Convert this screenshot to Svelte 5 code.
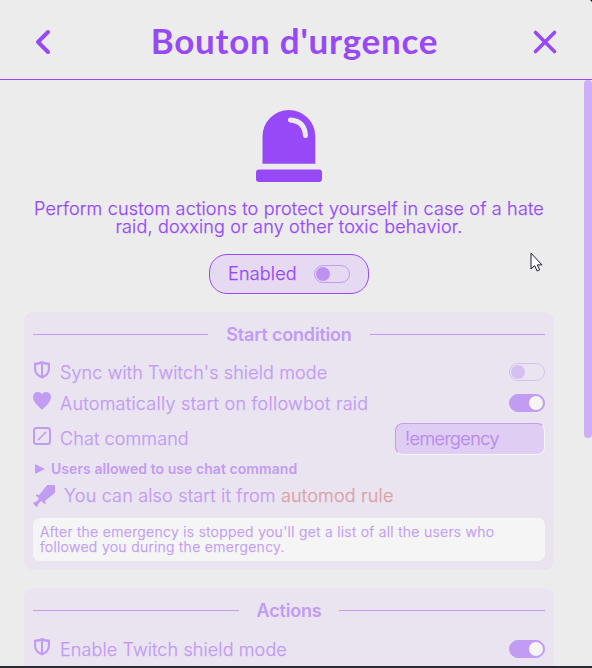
<script>
  let enabled = $state(false);
  let sync = $state(false);
  let followbot = $state(true);
  let shield = $state(true);
  let command = $state('!emergency');
</script>

{#snippet toggle(on, flip, label)}
  <button class="toggle" class:on role="switch" aria-checked={on} aria-label={label} onclick={flip}><i></i></button>
{/snippet}

{#snippet shieldIcon()}
  <svg class="icon" width="18" height="18" viewBox="0 0 18 18">
    <path fill-rule="evenodd" d="M9 0Q12.500 1.500 17 1.800V8Q16.600 14.800 9 17.500Q1.400 14.800 1 8V1.800Q5.500 1.500 9 0ZM8 3Q5.700 3.800 3.200 4V8Q3.400 12.700 8 14.500ZM10 3V14.500Q14.600 12.700 14.800 8V4Q12.300 3.800 10 3Z" />
  </svg>
{/snippet}

<div class="window">
  <header>
    <button class="nav" aria-label="Back">
      <svg width="18" height="26" viewBox="0 0 18 26"><path d="M15 3L5 13L15 23" /></svg>
    </button>
    <h1>Bouton d'urgence</h1>
    <button class="nav close" aria-label="Close">
      <svg width="26" height="26" viewBox="0 0 26 26"><path d="M3.500 3.500L22.500 22.500M22.500 3.500L3.500 22.500" /></svg>
    </button>
  </header>

  <main>
    <svg class="siren" width="66" height="72" viewBox="0 0 66 72">
      <path d="M6.500 53.700V26.500A26.400 26.500 0 0 1 59.300 26.500V53.700Z" />
      <rect y="59.500" width="66" height="12.500" rx="3" />
      <path class="shine" d="M34.500 10Q48.500 11 49.500 25.500" />
    </svg>
    <p class="intro">Perform custom actions to protect yourself in case of a hate<br />raid, doxxing or any other toxic behavior.</p>
    <div class="enable">
      <span>Enabled</span>
      {@render toggle(enabled, () => (enabled = !enabled), 'Enabled')}
    </div>

    <section>
      <h2><span>Start condition</span></h2>
      <div class="row">
        {@render shieldIcon()}
        <span>Sync with Twitch's shield mode</span>
        {@render toggle(sync, () => (sync = !sync), 'Sync')}
      </div>
      <div class="row followbot">
        <svg class="icon" width="18" height="18" viewBox="0 0 18 18"><path d="M9 17.700Q7.800 16.700 5.500 14.500C2 11.200 0 8.500 0 5C0 2 1.900 0 4.600 0C6.600 0 8.200 .9 9 2.300C9.800 .9 11.400 0 13.400 0C16.100 0 18 2 18 5C18 8.500 16 11.200 12.500 14.500Q10.200 16.700 9 17.700Z" /></svg>
        <span>Automatically start on followbot raid</span>
        {@render toggle(followbot, () => (followbot = !followbot), 'Followbot raid')}
      </div>
      <div class="row command">
        <svg class="icon line" width="18" height="18" viewBox="0 0 18 18"><rect x="1" y="1" width="16" height="16" rx="2.500" /><path d="M5.300 12.700L12.700 5.300" /></svg>
        <span>Chat command</span>
        <input bind:value={command} aria-label="Chat command" />
      </div>
      <div class="allowed"><svg width="10" height="10" viewBox="0 0 10 10"><path d="M0 0L10 5L0 10Z" /></svg><span>Users allowed to use chat command</span></div>
      <div class="also">
        <svg width="22" height="22" viewBox="0 0 22 22"><path d="M14.200 0H22V7.800L11.500 16.300L13 17.800L11.500 19.300L8.200 16L4.900 19.300L5.200 20.300L3.600 22L0 18.400L1.700 16.800L2.700 17.100L6 13.800L2.700 10.500L4.200 9L5.700 10.500Z" /></svg>
        <span>You can also start it from <a href="#automod">automod rule</a></span>
      </div>
      <div class="info">After the emergency is stopped you'll get a list of all the users who<br />followed you during the emergency.</div>
    </section>

    <section class="actions">
      <h2><span>Actions</span></h2>
      <div class="row">
        {@render shieldIcon()}
        <span>Enable Twitch shield mode</span>
        {@render toggle(shield, () => (shield = !shield), 'Shield mode')}
      </div>
    </section>
  </main>

  <div class="scrollbar"></div>
  <div class="bottom"></div>
  <div class="corner"></div>
  <svg class="cursor" width="13" height="21" viewBox="0 0 13 21"><path d="M1 1.200V17L4.600 13.700L7.200 19L9.700 17.800L7.300 12.900H12Z" /></svg>
</div>

<style>
  .window {
    position: relative;
    width: 592px;
    height: 668px;
    overflow: hidden;
    background: #ececec;
    color: #9749f7;
    font: 300 18px/18px Inter, sans-serif;
    letter-spacing: 0.18px;
    -webkit-text-stroke: 0.25px currentColor;
  }
  * { box-sizing: border-box; }
  button { padding: 0; border: 0; background: none; color: inherit; }
  svg { display: block; flex: none; fill: currentColor; }
  header {
    height: 80px;
    padding: 0 34px 0 33px;
    display: flex;
    align-items: center;
    justify-content: space-between;
    border-bottom: 1px solid #9749f7;
  }
  .nav { margin-top: 4px; }
  .nav svg { fill: none; stroke: currentColor; stroke-width: 4; stroke-linecap: round; stroke-linejoin: round; }
  .nav.close svg { stroke-width: 3.6; }
  h1 {
    margin: 0 0 0 6px;
    font: 700 35px/44px Lato, sans-serif;
    letter-spacing: 0.75px;
    white-space: nowrap;
    -webkit-text-stroke: 0;
  }
  main {
    width: 530px;
    margin-left: 24px;
    padding-top: 30px;
    display: flex;
    flex-direction: column;
    align-items: center;
  }
  .siren .shine { fill: none; stroke: #ececec; stroke-width: 5; stroke-linecap: round; }
  .intro { margin: 18px 0 0; text-align: center; white-space: nowrap; }
  .enable {
    width: 160px;
    height: 40px;
    margin: 18px 0;
    padding: 0 18px;
    display: flex;
    align-items: center;
    justify-content: space-between;
    border: 1px solid #9749f7;
    border-radius: 18px;
    background: #e6d9f2;
  }
  .toggle {
    flex: none;
    width: 36px;
    height: 18px;
    padding: 1px;
    display: flex;
    align-items: center;
    border: 1px solid #c29bf2;
    border-radius: 9px;
  }
  .toggle i { width: 14px; height: 14px; border-radius: 50%; background: #bd91f2; }
  .toggle.on { justify-content: flex-end; background: #c29bf2; }
  .toggle.on i { background: #f5f5f5; }
  section .toggle:not(.on) { border-color: #d6c0f1; }
  section .toggle:not(.on) i { background: #d6c0f1; }
  section {
    width: 530px;
    height: 258px;
    padding: 9px;
    border-radius: 9px;
    background: #eae4f0;
    color: #c29bf2;
    -webkit-text-stroke-color: #c29bf2;
  }
  .actions { margin-top: 18px; }
  h2 {
    height: 27px;
    margin: 0 0 12px;
    display: flex;
    align-items: center;
    gap: 18px;
    font: 600 18px/27px Inter, sans-serif;
    letter-spacing: -0.2px;
    -webkit-text-stroke: 0;
  }
  .actions h2 { margin-bottom: 13px; }
  h2::before, h2::after { content: ''; flex: 1; height: 1px; margin-top: -1px; background: currentColor; }
  .row { height: 24px; display: flex; align-items: center; letter-spacing: 0.11px; }
  .row.followbot { letter-spacing: 0.26px; }
  .row + .row { margin-top: 7px; }
  .row span { flex: 1; margin: 2px 0 0 9px; }
  .row .icon { margin-top: -4px; }
  .row .line { fill: none; stroke: currentColor; stroke-width: 2; stroke-linecap: round; }
  .row .line path { stroke-width: 1.6; }
  .row.command { height: 32px; margin-top: 8px; }
  .row.command .icon { margin-top: -6px; }
  .row.command span { margin-top: 0; }
  input {
    width: 150px;
    height: 32px;
    padding: 0 9px 2px;
    border: 1px solid;
    border-color: #c29bf2 #f5f5f5 #f5f5f5 #c29bf2;
    border-radius: 8px;
    outline: 0;
    background: #dfcdf3;
    color: #b78bea;
    font: inherit;
    letter-spacing: -0.55px;
    -webkit-text-stroke-color: #b78bea;
  }
  .allowed {
    height: 14px;
    margin-top: 7px;
    padding-left: 2px;
    display: flex;
    align-items: center;
    gap: 6px;
    font-size: 14px;
    line-height: 14px;
    font-weight: 600;
    letter-spacing: 0.06px;
    -webkit-text-stroke: 0;
  }
  .also { height: 22px; margin-top: 9px; display: flex; align-items: center; gap: 9px; }
  a { color: #d9a0a7; text-decoration: none; -webkit-text-stroke-color: #d9a0a7; }
  .info {
    height: 43px;
    margin-top: 11px;
    padding: 6px 7px;
    border-radius: 7px;
    background: #f5f5f5;
    font-size: 14px;
    line-height: 15px;
    letter-spacing: 0.32px;
    white-space: nowrap;
  }
  .scrollbar { position: absolute; top: 80px; right: 0; width: 8px; height: 358px; border-radius: 4px; background: #cfaef9; }
  .bottom { position: absolute; inset: auto 0 0; height: 2px; background: #292a33; }
  .corner { position: absolute; top: 0; right: 0; border: 1px solid; border-color: #18181b #18181b transparent transparent; }
  .cursor { position: absolute; left: 530px; top: 252px; fill: #fff; stroke: #221833; stroke-width: 1; }
</style>
